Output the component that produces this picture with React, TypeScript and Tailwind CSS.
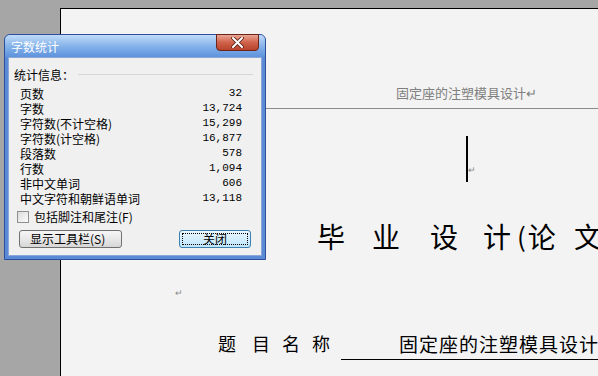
import React from "react";

const cjk = '"Noto Sans CJK SC", "Noto Sans", sans-serif';

const rows: [string, string][] = [
  ["页数", "32"],
  ["字数", "13,724"],
  ["字符数(不计空格)", "15,299"],
  ["字符数(计空格)", "16,877"],
  ["段落数", "578"],
  ["行数", "1,094"],
  ["非中文单词", "606"],
  ["中文字符和朝鲜语单词", "13,118"],
];

function Dialog() {
  return (
    <div
      className="absolute left-[4px] top-[34px] w-[262px] h-[226px] rounded-t-[6px] border border-[#2c4f9a] bg-[#5b8bd6] p-[3px] pt-0 flex flex-col"
      style={{ fontFamily: cjk }}
    >
      <div className="h-[22px] -mx-[3px] rounded-t-[5px] bg-gradient-to-b from-[#c2dbf7] via-[#86b3ea] to-[#5e92dc] flex items-center justify-between pl-[6px] pr-[6px] relative">
        <span className="text-white text-[12px] leading-none mt-[2px]">字数统计</span>
        <div className="absolute right-[6px] top-[-1px] w-[43px] h-[17px] rounded-b-[4px] border border-[#6b2418] bg-gradient-to-b from-[#e9a593] via-[#d0614a] to-[#b8432c] flex items-center justify-center">
          <svg width="13" height="11" viewBox="0 0 13 11">
            <path d="M2 1 L11 10 M11 1 L2 10" stroke="#5a2014" strokeWidth="3.6" strokeLinecap="round" />
            <path d="M2 1 L11 10 M11 1 L2 10" stroke="#ffffff" strokeWidth="2" strokeLinecap="round" />
          </svg>
        </div>
      </div>
      <div className="flex-1 bg-[#f0f0f0] border border-[#8aa7d6] flex flex-col pl-[5px] pr-[8px] pt-[9px] text-[12px] text-black">
        <div className="flex items-center h-[15px]">
          <span className="leading-[15px]">统计信息：</span>
          <div className="flex-1 h-px bg-[#d6d6d6] ml-[4px]" />
        </div>
        <div className="flex flex-col pl-[6px] pr-[11px] mt-[4px]">
          {rows.map(([k, v]) => (
            <div key={k} className="flex items-center justify-between h-[15px]">
              <span className="leading-[15px]">{k}</span>
              <span className="leading-[15px] text-[11px]" style={{ fontFamily: '"Liberation Mono", monospace' }}>
                {v}
              </span>
            </div>
          ))}
        </div>
        <div className="flex items-center mt-[3px] h-[15px]">
          <div className="w-[12px] h-[12px] border border-[#8e8f8f] bg-gradient-to-br from-[#dcdcdc] to-[#fbfbfb] ml-[3px]" />
          <span className="ml-[5px] leading-[15px]">包括脚注和尾注(F)</span>
        </div>
        <div className="flex items-center justify-between mt-[6px] pl-[5px] pr-[2px]">
          <div className="w-[103px] h-[18px] rounded-[3px] border border-[#707070] bg-gradient-to-b from-[#f6f6f6] via-[#e8e8e8] to-[#d6d6d6] flex items-center pl-[10px] leading-none">
            显示工具栏(S)
          </div>
          <div className="w-[72px] h-[18px] rounded-[3px] border border-[#3c7fb1] bg-gradient-to-b from-[#eaf6fd] to-[#bee6fd] p-[2px]">
            <div className="w-full h-full border border-dotted border-black flex items-center justify-center leading-none">
              关闭
            </div>
          </div>
        </div>
      </div>
    </div>
  );
}

export default function App() {
  return (
    <div className="w-[598px] h-[376px] bg-[#a6a6a6] relative overflow-hidden">
      <div
        className="ml-[60px] mt-[8px] h-[400px] border-l border-t border-black bg-[#f3f3f3] flex flex-col"
        style={{ fontFamily: cjk }}
      >
        <div className="h-[100px] shrink-0 border-b border-[#8a8a8a] flex items-end pb-[7px] pl-[335px]">
          <span className="text-[13px] leading-[16px] text-[#7f7f7f] whitespace-nowrap">固定座的注塑模具设计↵</span>
        </div>
        <div className="flex items-end mt-[27px] ml-[405px] h-[46px]">
          <div className="w-[2px] h-[46px] bg-black" />
          <span className="text-[9px] text-[#888] leading-none mb-[8px]">↵</span>
        </div>
        <div className="flex items-center mt-[37px] pl-[256px] h-[34px] text-[28px] leading-none text-black whitespace-nowrap">
          <span>毕</span>
          <span className="ml-[27px]">业</span>
          <span className="ml-[30px]">设</span>
          <span className="ml-[25px]">计</span>
          <span className="ml-[6px] text-[26px]">(</span>
          <span className="ml-[2px]">论</span>
          <span className="ml-[18px]">文</span>
        </div>
        <div className="mt-[35px] pl-[114px] text-[9px] text-[#888] leading-none">↵</div>
        <div className="flex items-end mt-[37px] pl-[157px] whitespace-nowrap">
          <div className="flex text-[18px] leading-none text-black pb-[8px]">
            <span>题</span>
            <span className="ml-[16px]">目</span>
            <span className="ml-[12px]">名</span>
            <span className="ml-[12px]">称</span>
          </div>
          <div className="ml-[11px] flex-1 border-b border-black pl-[58px] pb-[6px] text-[19px] leading-none text-black tracking-[1px]">
            固定座的注塑模具设计
          </div>
        </div>
      </div>
      <Dialog />
    </div>
  );
}
